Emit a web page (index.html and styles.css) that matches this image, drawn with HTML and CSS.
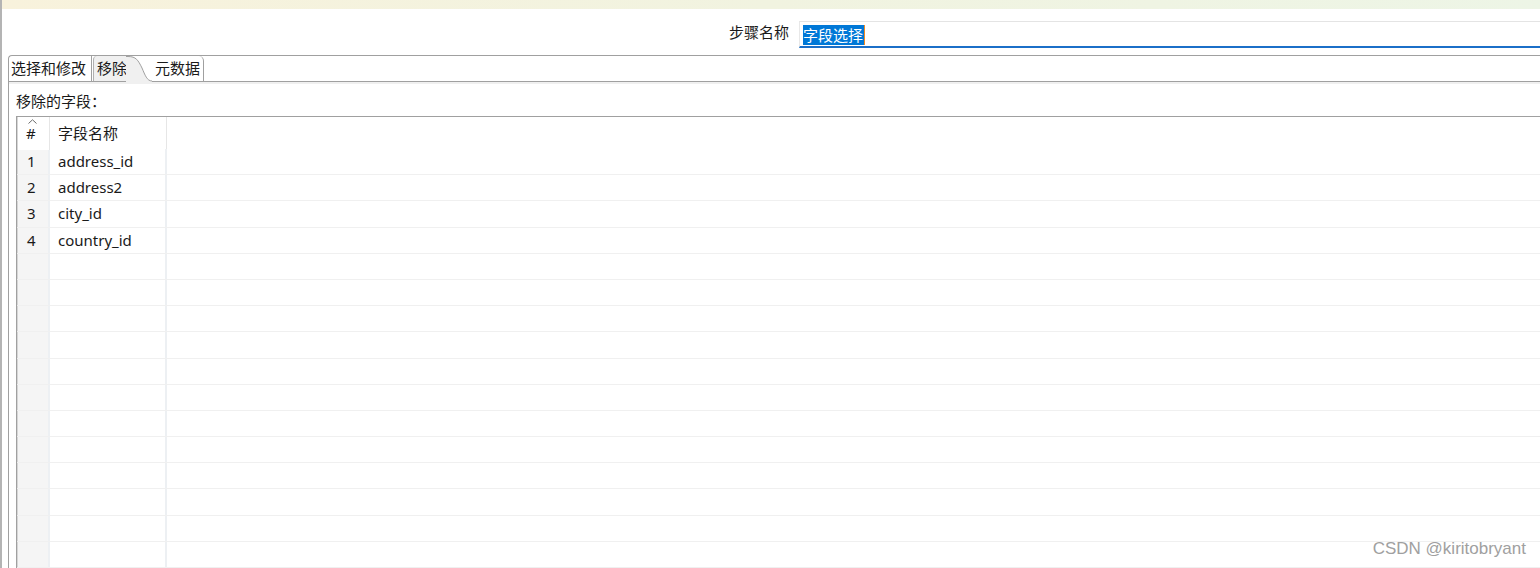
FILE: index.html
```html
<!DOCTYPE html>
<html lang="zh-CN">
<head>
    <meta charset="UTF-8">
    <title>字段选择</title>
    <link rel="stylesheet" href="styles.css">
</head>
<body>
    <div class="window">
        <div class="topbar"></div>

        <div class="step-row">
            <label class="step-label" for="stepName">步骤名称</label>
            <div class="step-input" id="stepName"><span class="selected">字段选择</span></div>
        </div>

        <div class="folder">
            <div class="tabs">
                <div class="tab tab-first">选择和修改</div>
                <div class="tab tab-active">移除</div>
                <svg class="tab-curve" width="26" height="26" viewBox="0 0 26 26">
                    <path d="M0 0 L2 0 C10 0 12 4 16 12 C19 19 21 25 26 25 L26 26 L0 26 Z" fill="#f0f0f0"/>
                    <path d="M0 0.5 L2 0.5 C10 0.5 12 4 16 12 C19 19 21 25 26 25" fill="none" stroke="#a0a0a0" stroke-width="1"/>
                </svg>
                <div class="tab tab-last">元数据</div>
            </div>

            <div class="tab-body">
                <div class="section-label">移除的字段：</div>
                <div class="grid">
                    <div class="row head">
                        <div class="cell num">
                            <svg class="sort" width="9" height="5" viewBox="0 0 9 5"><path d="M0.5 4.5 L4.5 0.8 L8.5 4.5" fill="none" stroke="#6a6a6a" stroke-width="1"/></svg>
                            #
                        </div>
                        <div class="cell name">字段名称</div>
                        <div class="cell rest"></div>
                    </div>
                    <div class="row"><div class="cell num">1</div><div class="cell name">address_id</div><div class="cell rest"></div></div>
                    <div class="row"><div class="cell num">2</div><div class="cell name">address2</div><div class="cell rest"></div></div>
                    <div class="row"><div class="cell num">3</div><div class="cell name">city_id</div><div class="cell rest"></div></div>
                    <div class="row"><div class="cell num">4</div><div class="cell name">country_id</div><div class="cell rest"></div></div>
                    <div class="row"><div class="cell num"></div><div class="cell name"></div><div class="cell rest"></div></div>
                    <div class="row"><div class="cell num"></div><div class="cell name"></div><div class="cell rest"></div></div>
                    <div class="row"><div class="cell num"></div><div class="cell name"></div><div class="cell rest"></div></div>
                    <div class="row"><div class="cell num"></div><div class="cell name"></div><div class="cell rest"></div></div>
                    <div class="row"><div class="cell num"></div><div class="cell name"></div><div class="cell rest"></div></div>
                    <div class="row"><div class="cell num"></div><div class="cell name"></div><div class="cell rest"></div></div>
                    <div class="row"><div class="cell num"></div><div class="cell name"></div><div class="cell rest"></div></div>
                    <div class="row"><div class="cell num"></div><div class="cell name"></div><div class="cell rest"></div></div>
                    <div class="row"><div class="cell num"></div><div class="cell name"></div><div class="cell rest"></div></div>
                    <div class="row"><div class="cell num"></div><div class="cell name"></div><div class="cell rest"></div></div>
                    <div class="row"><div class="cell num"></div><div class="cell name"></div><div class="cell rest"></div></div>
                    <div class="row"><div class="cell num"></div><div class="cell name"></div><div class="cell rest"></div></div>
                </div>
            </div>
        </div>

        <div class="watermark">CSDN @kiritobryant</div>
    </div>
</body>
</html>
```

FILE: styles.css
```css
html, body {
    margin: 0;
    padding: 0;
}
body {
    font-family: "Noto Sans", "Noto Sans CJK SC", sans-serif;
    font-size: 15px;
    color: #1a1a1a;
    background: #fff;
}
.window {
    position: relative;
    height: 568px;
    border-left: 2px solid #b4b4b4;
    overflow: hidden;
}
.topbar {
    height: 9px;
    background: linear-gradient(to right, #f8f2dc, #f1f3e0 50%, #edf5e6);
}

/* step name */
.step-row {
    display: flex;
    height: 46px;
    padding-top: 12px;
    box-sizing: border-box;
}
.step-label {
    width: 797px;
    text-align: right;
    line-height: 22px;
    padding-right: 10px;
    box-sizing: border-box;
}
.step-input {
    flex: 1;
    height: 27px;
    box-sizing: border-box;
    border-top: 1px solid #e4e4e4;
    border-left: 1px solid #e8e8e8;
    border-bottom: 2px solid #1b6fc8;
    padding: 3px 0 0 3px;
    line-height: 20px;
}
.selected {
    display: inline-block;
    background: #0078d7;
    color: #fff;
    border-right: 1px solid #f08a24;
    padding-right: 1px;
}

/* tab folder */
.folder {
    margin-left: 6px;
    height: 513px;
    border-top: 1px solid #a0a0a0;
    border-left: 1px solid #a0a0a0;
    border-top-left-radius: 4px;
}
.tabs {
    display: flex;
    height: 26px;
    border-bottom: 1px solid #a0a0a0;
    box-sizing: border-box;
}
.tab {
    line-height: 25px;
    white-space: nowrap;
}
.tab-first {
    width: 83px;
    padding-left: 2px;
    box-sizing: border-box;
    border-right: 1px solid #a0a0a0;
}
.tab-active {
    background: #f0f0f0;
    margin-left: 1px;
    padding-left: 3px;
    width: 29px;
    border-left: 1px solid #b0b0b0;
    border-top-left-radius: 4px;
}
.tab-curve {
    display: block;
    flex-shrink: 0;
}
.tab-last {
    width: 52px;
    padding-left: 3px;
    box-sizing: border-box;
    border-right: 1px solid #a0a0a0;
    border-top-right-radius: 5px;
}

.tab-body {
    border-top: 2px solid #f0f0f0;
    padding: 7px 0 0 7px;
}
.section-label {
    line-height: 20px;
    height: 20px;
}

/* field table */
.grid {
    margin-top: 5px;
    border-top: 1px solid #a0a0a0;
    border-left: 1px solid #a0a0a0;
    box-shadow: inset 1px 0 0 #d6d6d6;
}
.row {
    display: grid;
    grid-template-columns: 33px 117px 1fr;
    height: 26.2px;
    box-sizing: border-box;
    border-bottom: 1px solid #f0f0f0;
}
.row.head {
    height: 32px;
    border-bottom: none;
}
.cell {
    line-height: 25px;
    box-sizing: border-box;
    white-space: nowrap;
}
.num {
    background: #f5f5f5;
    padding-left: 9px;
    margin-left: 1px;
    border-right: 2px solid #edf0f3;
}
.name {
    padding-left: 8px;
    border-right: 2px solid #edf0f3;
}
.head .cell {
    line-height: 33px;
    border-right-color: #e6e6e6;
    border-right-width: 1px;
}
.head .num {
    background: #fff;
    position: relative;
    padding-left: 8px;
}
.sort {
    position: absolute;
    left: 10px;
    top: 2px;
    display: block;
}

.watermark {
    position: absolute;
    right: 14px;
    bottom: 9px;
    font-family: "Liberation Sans", Arial, sans-serif;
    font-size: 17px;
    color: #a0a0a0;
}
```
